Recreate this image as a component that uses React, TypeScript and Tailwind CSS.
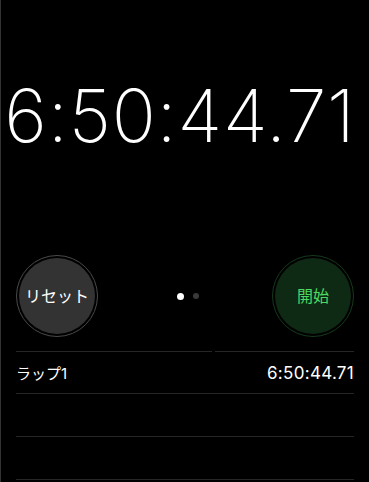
import React from "react";

const font = { fontFamily: '"Inter", "Noto Sans CJK JP", sans-serif' };

function RoundButton({
  label,
  variant,
}: {
  label: string;
  variant: "gray" | "green";
}) {
  const outer =
    variant === "gray" ? "border-[#4a4a4a]" : "border-[#163a1c]";
  const inner =
    variant === "gray"
      ? "bg-[#333333] text-white"
      : "bg-[#0f2a14] text-[#4cd964]";
  return (
    <div
      className={`w-[82px] h-[82px] rounded-full border-[1.5px] ${outer} p-[2px] flex`}
    >
      <div
        className={`flex-1 rounded-full flex items-center justify-center text-[16px] ${inner}`}
      >
        {label}
      </div>
    </div>
  );
}

export default function App() {
  return (
    <div
      className="w-[369px] h-[482px] bg-black overflow-hidden flex flex-col border-l border-[#333]"
      style={font}
    >
      {/* main time */}
      <div className="h-[255px] shrink-0 flex items-center justify-center pb-[24px] pr-[10px]">
        <div className="text-white text-[73px] font-extralight leading-none tracking-[0.8px] whitespace-nowrap">
          6:50:44.71
        </div>
      </div>

      {/* controls */}
      <div className="flex items-center justify-between px-[15px] h-[82px] shrink-0">
        <RoundButton label="リセット" variant="gray" />
        <div className="flex items-center gap-[9px] pl-[6px]">
          <div className="w-[7px] h-[7px] rounded-full bg-white" />
          <div className="w-[6px] h-[6px] rounded-full bg-[#3a3a3a]" />
        </div>
        <RoundButton label="開始" variant="green" />
      </div>

      {/* laps */}
      <div className="mt-[14px] px-[15px]">
        <div className="flex gap-[3px]">
          <div className="h-px w-[196px] bg-[#262626]" />
          <div className="h-px flex-1 bg-[#262626]" />
        </div>
        <div className="h-[42px] flex items-center justify-between text-white border-b border-[#262626] pt-[3px]">
          <span className="text-[15px]">ラップ1</span>
          <span className="text-[17px] tracking-[0.3px]">6:50:44.71</span>
        </div>
        <div className="h-[43px] border-b border-[#262626]" />
        <div className="h-[43px] border-b border-[#262626]" />
      </div>
    </div>
  );
}
